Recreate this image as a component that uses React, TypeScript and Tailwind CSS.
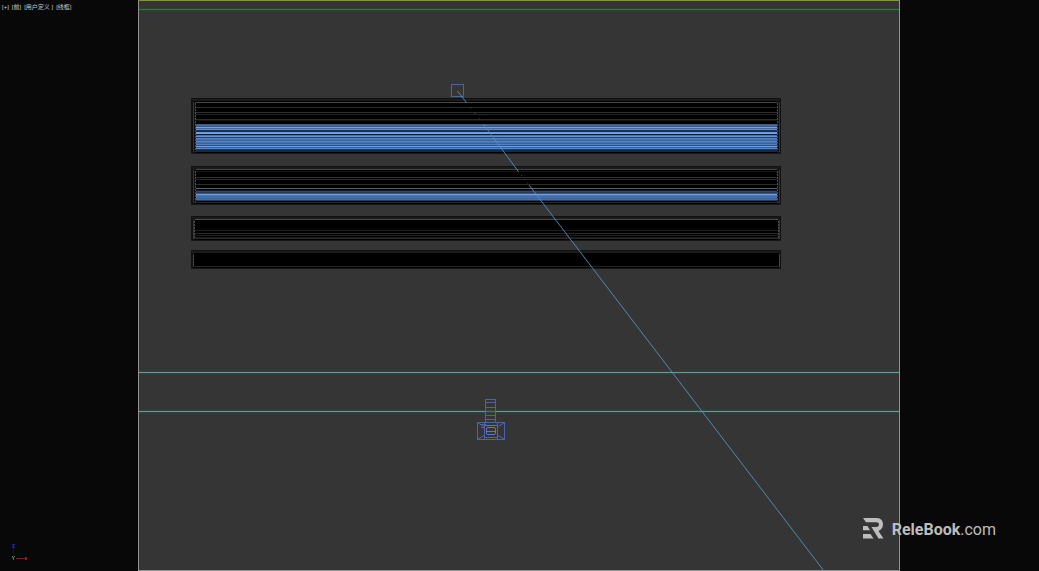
type Stripe = [y: number, height: number, color: string];

interface Slab {
  top: number;
  height: number;
  inset: number;
  stripes: Stripe[];
}

const slabs: Slab[] = [
  {
    top: 98,
    height: 55,
    inset: 4,
    stripes: [
      [102, 1, "#4a4a4a"], [107, 1, "#2b2b2b"], [112, 1, "#303030"], [114, 1, "#242424"],
      [119, 1, "#2c2c29"], [120, 1, "#141412"],
      [124, 1, "#3d5c8e"], [125, 1, "#46699f"], [126, 1, "#37588b"], [127, 1, "#71a4e6"],
      [128, 1, "#426aa4"], [129, 1, "#5c8ccd"], [130, 1, "#1c3558"], [131, 1, "#182c4a"],
      [132, 1, "#6b9de0"], [133, 1, "#70a4e9"], [134, 1, "#0b172b"], [135, 1, "#4674b2"],
      [136, 1, "#6393d6"], [137, 1, "#263f67"], [138, 1, "#5482c0"], [139, 1, "#4674b0"],
      [140, 1, "#3e659d"], [141, 1, "#5481bf"], [142, 1, "#4975b1"], [143, 1, "#3b6098"],
      [144, 1, "#5582be"], [145, 1, "#304e7d"], [146, 1, "#6b9fe5"], [147, 1, "#3b629a"],
      [148, 1, "#5887c8"], [149, 1, "#253758"], [150, 1, "#20283c"],
    ],
  },
  {
    top: 166,
    height: 38,
    inset: 4,
    stripes: [
      [169, 1, "#454545"], [171, 1, "#191919"], [177, 1, "#303030"], [179, 1, "#2a2a2a"],
      [184, 1, "#2b2b2b"], [188, 1, "#586272"], [190, 1, "#161b2a"], [191, 1, "#304668"],
      [192, 1, "#283954"], [193, 1, "#365485"], [194, 1, "#6ca1e8"], [195, 1, "#4a76b5"],
      [196, 1, "#456ca6"], [197, 1, "#456ca6"], [198, 1, "#41659d"], [199, 1, "#456ca6"],
      [200, 1, "#283c60"], [202, 1, "#111111"],
    ],
  },
  {
    top: 216,
    height: 24,
    inset: 3,
    stripes: [
      [219, 1, "#4a4a4a"], [230, 1, "#1e1e1e"], [233, 1, "#2b2b2b"],
      [235, 1, "#202020"], [237, 1, "#1d1d1d"],
    ],
  },
  { top: 250, height: 18, inset: 2, stripes: [[252, 1, "#191919"]] },
];

function SlabWire({ top, height, inset, stripes }: Slab) {
  const bottom = top + height;
  const left = 192 + inset;
  const width = 589 - inset * 2;
  return (
    <g>
      <rect x="191" y={top} width="590" height={height + 1} fill="#111" />
      <rect x="192" y={top + 1} width="588" height="2" fill="#1b1b1b" />
      <rect x="193" y={top + 4} width="1" height={height - 5} fill="#353535" />
      <rect x="779" y={top + 4} width="1" height={height - 5} fill="#353535" />
      <rect x={left} y={top + 3} width={width} height={height - 3} fill="#000" />
      {stripes.map(([y, h, color]) => (
        <rect key={y} x={left} y={y} width={width} height={h} fill={color} />
      ))}
      <path
        d={`M${left - 0.5} ${top + 5}V${bottom - 1}M${left + width + 0.5} ${top + 5}V${bottom - 1}`}
        stroke="#4c4c4c"
        strokeDasharray="2 1"
      />
      <path d={`M193 ${bottom - 1.5}H779`} stroke="#262626" />
      <path d={`M191 ${bottom + 0.5}H781`} stroke="#171717" />
    </g>
  );
}

function CameraTarget() {
  return (
    <g fill="none" stroke="#4b64a8">
      <path d="M485.5 422V399.5H495.5V422M486 402.5H495M486 407.5H495M486 411.5H495M486 415.5H495M486 419.5H495" />
      <rect x="477.5" y="422.5" width="27" height="17" />
      <path d="M478 423L485 427M504 423L497 427M478 439L485 435M504 439L497 435" shapeRendering="auto" />
      <path d="M484.5 423V439M497.5 423V439M480 424.5H486M481 427.5H485M485 437.5H497" />
      <rect x="486.5" y="427.5" width="9" height="7" rx="2" stroke="#5877c4" />
      <path d="M487 431.5H495M485 425.5H497" stroke="#5877c4" />
    </g>
  );
}

function Viewport() {
  return (
    <svg viewBox="138 0 762 571" className="block h-screen w-full" role="img" aria-label="Front wireframe view" shapeRendering="crispEdges">
      <rect x="138" width="762" height="571" fill="#353535" />
      <rect x="138" y="8" width="762" height="3" fill="#2f422f" />
      <rect x="138" y="9" width="762" height="1" fill="#347a36" />
      {slabs.map((slab) => (
        <SlabWire key={slab.top} {...slab} />
      ))}
      <path d="M138 371.5H900M138 373.5H900M138 410.5H900M138 412.5H900" stroke="#304541" />
      <path d="M138 372.5H900M138 411.5H900" stroke="#639b8c" />
      <rect x="451.5" y="84.5" width="12" height="12" fill="none" stroke="#4b6598" />
      <g stroke="#5792b8" shapeRendering="auto">
        <path d="M457.5 91L466 102" strokeWidth="0.9" />
        <path d="M466 102L484 125" strokeWidth="0.7" strokeDasharray="1 6" />
        <path d="M484 125L518 171" strokeWidth="0.9" />
        <path d="M518 171L529 185" strokeWidth="0.7" strokeDasharray="1 4" />
        <path d="M529 185L824 571" strokeWidth="0.9" />
      </g>
      <CameraTarget />
      <path d="M138.5 0V571M899.5 0V571M138 570.5H900" stroke="#929292" />
      <path d="M138 0.5H900" stroke="#8b9048" />
    </svg>
  );
}

function Axes() {
  return (
    <svg viewBox="0 0 24 22" className="mb-[7px] ml-2 h-[22px] w-6" aria-label="Axes" shapeRendering="crispEdges">
      <path d="M5.5 6V14" stroke="#10103d" />
      <path d="M8 16.5H17" stroke="#702020" />
      <path d="M4 2.5H7M6 3.5L4 5.5M4 5.5H7" stroke="#242486" />
      <path d="M4 14L5.5 16L7 14M5.5 16V18" fill="none" stroke="#348338" />
      <path d="M17 15L19 18M19 15L17 18" stroke="#812222" />
    </svg>
  );
}

function Watermark() {
  return (
    <div className="absolute right-[43px] bottom-[29px] flex items-start gap-2 text-[#bdbdbd]">
      <svg viewBox="0 0 21 21" className="h-[21px] w-[21px]" fill="currentColor" aria-hidden="true">
        <path d="M0 0H14C18 0 20 3 20 6.5C20 9.5 18 12 15.5 13L20.5 20.5H15.5L8.5 9H13.5C15 9 16 8 16 6.5C16 5 15 4.2 13.5 4.2H3Z" />
        <path d="M0 8H4.5L7 12.2H0ZM0 16H7.5L10.5 20.5H0Z" />
      </svg>
      <span className="text-base leading-6 font-normal whitespace-nowrap">
        <strong className="font-bold">ReleBook</strong>.com
      </span>
    </div>
  );
}

export default function App() {
  return (
    <main className="relative grid min-h-screen grid-cols-[138fr_762fr_139fr] overflow-hidden bg-[#080808] font-[Roboto,sans-serif]">
      <aside className="flex min-w-0 flex-col justify-between">
        <nav
          aria-label="Viewport labels"
          className="flex gap-[3px] pt-0.5 pl-0.5 font-['Liberation_Sans','Noto_Sans_CJK_SC',sans-serif] text-[6px] leading-[10px] whitespace-nowrap text-[#c8c8c8]"
        >
          <button type="button">[+]</button>
          <button type="button">[前]</button>
          <button type="button">[用户定义 ]</button>
          <button type="button">[线框]</button>
        </nav>
        <Axes />
      </aside>
      <Viewport />
      <Watermark />
    </main>
  );
}
